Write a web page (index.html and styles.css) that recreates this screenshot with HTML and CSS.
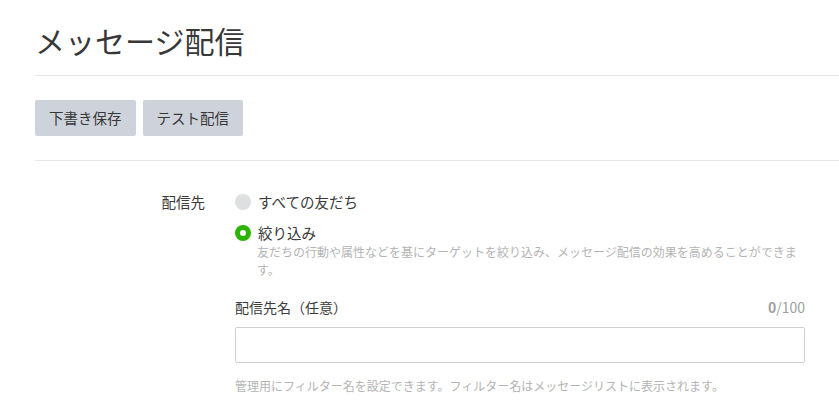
FILE: index.html
```html
<!DOCTYPE html>
<html lang="ja">
<head>
<meta charset="utf-8">
<link rel="stylesheet" href="styles.css">
</head>
<body>
<div class="page">
  <header class="header">
    <h1 class="title">メッセージ配信</h1>
  </header>
  <div class="toolbar">
    <button class="btn">下書き保存</button>
    <button class="btn">テスト配信</button>
  </div>
  <div class="form">
    <div class="form-row">
      <div class="form-label">配信先</div>
      <div class="form-body">
        <label class="radio">
          <span class="radio-dot"></span>
          <span class="radio-text">すべての友だち</span>
        </label>
        <label class="radio radio-second">
          <span class="radio-dot checked"></span>
          <span class="radio-text">絞り込み</span>
        </label>
        <p class="radio-desc">友だちの行動や属性などを基にターゲットを絞り込み、メッセージ配信の効果を高めることができます。</p>
        <div class="field">
          <div class="field-head">
            <span class="field-label">配信先名（任意）</span>
            <span class="counter"><b>0</b>/100</span>
          </div>
          <input class="text-input" type="text">
          <p class="field-help">管理用にフィルター名を設定できます。フィルター名はメッセージリストに表示されます。</p>
        </div>
      </div>
    </div>
  </div>
</div>
</body>
</html>
```

FILE: styles.css
```css
* { box-sizing: border-box; }
html, body { margin: 0; padding: 0; background: #fff; }
body {
  font-family: "Noto Sans CJK JP", "Noto Sans", sans-serif;
  color: #3a3a3a;
  overflow: hidden;
}
.page {
  padding-left: 35px;
}
.header {
  padding-top: 18px;
  padding-bottom: 13px;
  border-bottom: 1px solid #e6e6e6;
}
.title {
  margin: 0;
  font-size: 30px;
  line-height: 44px;
  font-weight: 400;
  color: #383838;
}
.toolbar {
  display: flex;
  gap: 7px;
  padding: 24px 0;
  border-bottom: 1px solid #e6e6e6;
}
.btn {
  height: 36px;
  padding: 0 14px;
  border: none;
  border-radius: 2px;
  background: #ced3db;
  color: #383838;
  font-family: inherit;
  font-size: 14.5px;
  line-height: 36px;
}
.form {
  padding-top: 31px;
}
.form-row {
  display: grid;
  grid-template-columns: 170px 570px;
  column-gap: 30px;
}
.form-label {
  text-align: right;
  font-size: 14.5px;
  line-height: 20px;
}
.radio {
  display: flex;
  align-items: center;
  gap: 7px;
  font-size: 14.5px;
  line-height: 20px;
}
.radio-second { margin-top: 11px; }
.radio-dot {
  width: 16px;
  height: 16px;
  border-radius: 50%;
  background: #dedfe1;
  flex: none;
}
.radio-dot.checked {
  background: #fff;
  border: 5px solid #2db400;
}
.radio-desc {
  margin: 0;
  padding-left: 22px;
  font-size: 12px;
  line-height: 18px;
  color: #b4b4b4;
}
.field { margin-top: 18px; }
.field-head {
  display: flex;
  justify-content: space-between;
  font-size: 14px;
  line-height: 20px;
}
.counter { color: #a0a0a0; }
.counter b { font-weight: 700; color: #a0a0a0; }
.text-input {
  display: block;
  width: 100%;
  height: 36px;
  margin-top: 10px;
  border: 1px solid #cfcfcf;
  border-radius: 2px;
  font-size: 14px;
  padding: 0 10px;
  outline: none;
}
.field-help {
  margin: 14px 0 0;
  font-size: 12px;
  line-height: 18px;
  color: #b4b4b4;
}
```
